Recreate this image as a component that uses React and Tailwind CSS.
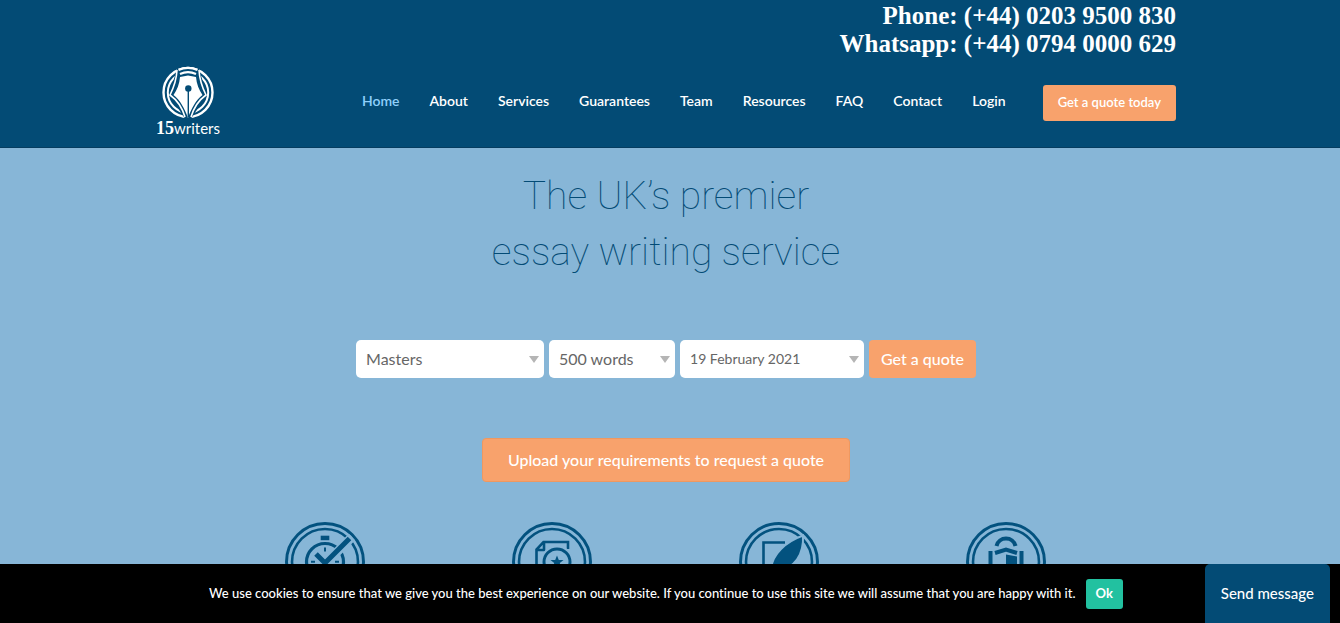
import React from 'react';

const navItems = ['Home', 'About', 'Services', 'Guarantees', 'Team', 'Resources', 'FAQ', 'Contact', 'Login'];

function Logo() {
  return (
    <a href="#home" aria-label="15writers" className="flex flex-col items-center text-white">
      <svg viewBox="0 0 52 54" className="w-[52px] h-[54px]" fill="none">
        <circle cx="26" cy="26.500" r="24.500" stroke="#fff" strokeWidth="2.400" />
        <circle cx="26" cy="26.500" r="20.200" stroke="#fff" strokeWidth="2" />
        <path d="M15 3 L37 3 L45 29 L28 54 L24 54 L7 29 Z" fill="#034b75" />
        <path d="M16.500 3.900 A24.500 24.500 0 0 1 35.500 3.900 M18 7.900 A20.200 20.200 0 0 1 34 7.900" stroke="#fff" strokeWidth="2.200" />
        <path d="M15 4 C14.500 14 12 21 8 29 C15 34 20 41 23 51 M37 4 C37.500 14 40 21 44 29 C37 34 32 41 29 51" stroke="#fff" strokeWidth="1.600" />
        <path d="M18 11 L26 9.500 L34 11 C34.500 18 37 24 40.500 29 C34 34 29.500 42 26 52 C22.500 42 18 34 11.500 29 C15 24 17.500 18 18 11 Z" fill="#fff" />
        <circle cx="26.300" cy="22.500" r="3.200" fill="#034b75" />
        <path d="M26.300 24 V51" stroke="#034b75" strokeWidth="1.400" />
      </svg>
      <span className="flex items-baseline leading-4">
        <span className="font-['Liberation_Serif'] font-bold text-lg leading-4">15</span>
        <span className="text-[15px] leading-4">writers</span>
      </span>
    </a>
  );
}

function Arrow() {
  return (
    <svg viewBox="0 0 10 7" className="absolute right-[5px] top-4 w-[10px] h-[7px] pointer-events-none">
      <path d="M0 0 H10 L5 7 Z" fill="#b5b5b5" />
    </svg>
  );
}

function SelectBox({ label, options, className }) {
  return (
    <div className={`relative ${className}`}>
      <select aria-label={label} className="appearance-none w-full h-[38px] pl-2.5 pr-5 rounded-[5px] bg-white text-[#666]">
        {options.map((option) => (
          <option key={option}>{option}</option>
        ))}
      </select>
      <Arrow />
    </div>
  );
}

function Badge({ children }) {
  return (
    <svg viewBox="0 0 80 80" className="size-20" fill="none" stroke="#03527f">
      <circle cx="40" cy="40" r="38.500" strokeWidth="3" />
      <circle cx="40" cy="40" r="33" strokeWidth="2.600" />
      {children}
    </svg>
  );
}

function StopwatchIcon() {
  return (
    <Badge>
      <rect x="35.700" y="13.700" width="8.600" height="4.500" fill="#03527f" stroke="none" />
      <circle cx="40" cy="40" r="18.500" strokeWidth="3.200" />
      <path d="M40 25.500 V29.500 M26 39.700 H30 M50 39.700 H54" strokeWidth="2" />
      <path d="M31 33 L40 42 L67 15" stroke="#87b6d7" strokeWidth="9" />
      <path d="M31 32 L40 41 L64.500 16.500" strokeWidth="5" />
    </Badge>
  );
}

function CertificateIcon() {
  return (
    <Badge>
      <path d="M56 27 V20 H31.500 L24.500 27.500 V60 H56 V55 M32 20 V28 H24.500" strokeWidth="2.600" />
      <circle cx="45" cy="40" r="15" fill="#87b6d7" stroke="#87b6d7" strokeWidth="3" />
      <circle cx="45" cy="40" r="13" strokeWidth="3" />
      <path d="M45 33.500 L46.800 38 H51.500 L47.800 41 L49.200 46 L45 43 L40.800 46 L42.200 41 L38.500 38 H43.200 Z" fill="#03527f" stroke="none" />
    </Badge>
  );
}

function QuillIcon() {
  return (
    <Badge>
      <path d="M46 20.500 H24.500 V60 H56 V46" strokeWidth="2.600" />
      <path d="M64 13.500 C46 20 34 32 32 46 L28 58 L38 49 C56 47 65 32 64 13.500 Z" fill="#03527f" stroke="#87b6d7" strokeWidth="2" />
    </Badge>
  );
}

function LockIcon() {
  return (
    <Badge>
      <path d="M30.500 24 A9.800 9.800 0 0 1 49.500 24" strokeWidth="4" />
      <path d="M29 31 L40 27.500 L51 31" strokeWidth="4" />
      <path d="M24.500 29 V60 H55.500 V29" strokeWidth="4" />
      <path d="M40 32.500 L51 34.500 V56 H40 Z" fill="#03527f" stroke="none" />
    </Badge>
  );
}

function Header() {
  return (
    <header className="bg-[#034b75] border-b border-[#063d60]">
      <div className="max-w-[1020px] mx-auto">
        <div className="text-right text-white font-['Liberation_Serif'] font-bold text-[25px] leading-7 pt-0.5">
          <p>Phone: (+44) 0203 9500 830</p>
          <p>Whatsapp: (+44) 0794 0000 629</p>
        </div>
        <div className="flex items-start justify-between pt-2 pb-[11px]">
          <Logo />
          <div className="flex items-start pt-[19px]">
            <nav className="flex gap-[30px] pt-1.5 mr-[37px] text-sm font-semibold text-white">
              {navItems.map((item) => (
                <a key={item} href={`#${item.toLowerCase()}`} className={item === 'Home' ? 'text-[#8fd0fb]' : ''}>
                  {item}
                </a>
              ))}
            </nav>
            <button className="h-9 px-[15px] rounded-[3px] bg-[#f8a26c] text-white text-[13px] font-semibold">
              Get a quote today
            </button>
          </div>
        </div>
      </div>
    </header>
  );
}

function Hero() {
  return (
    <main className="flex flex-col items-center pt-5">
      <h1 className="text-center text-[#034b75] font-['Roboto',sans-serif] font-thin text-[39px] leading-14">
        The UK’s premier
        <br />
        essay writing service
      </h1>
      <form className="flex gap-[5px] mt-15 text-base">
        <SelectBox label="Level" className="w-[188px]" options={['Masters', 'Undergraduate', 'PhD']} />
        <SelectBox label="Word count" className="w-[126px]" options={['500 words', '1000 words', '1500 words']} />
        <SelectBox label="Deadline" className="w-[184px] text-sm" options={['19 February 2021', '20 February 2021']} />
        <button type="button" className="h-[38px] px-3 rounded-[4px] bg-[#f8a26c] text-white font-medium">Get a quote</button>
      </form>
      <button className="h-11 mt-15 px-[25px] rounded-[4px] border border-[#ef9860] bg-[#f8a26c] text-white font-medium">
        Upload your requirements to request a quote
      </button>
      <div className="flex gap-[147px] mt-10 pr-0.5">
        <StopwatchIcon />
        <CertificateIcon />
        <QuillIcon />
        <LockIcon />
      </div>
    </main>
  );
}

function CookieBar() {
  return (
    <div className="fixed inset-x-0 bottom-0 h-[59px] pr-2 flex items-center justify-center gap-2.5 bg-black text-white text-[13px] font-medium">
      <p>
        We use cookies to ensure that we give you the best experience on our website. If you continue to use this site we will assume that you are happy with it.
      </p>
      <button className="h-[30px] px-2.5 rounded-[3px] bg-[#22c1a0] font-bold">Ok</button>
    </div>
  );
}

export default function App() {
  return (
    <div className="min-h-screen pr-2 bg-[linear-gradient(#034b75_0_147px,#063d60_147px_148px,#87b6d7_148px)] font-['Lato',sans-serif] [font-variant-ligatures:none]">
      <Header />
      <Hero />
      <CookieBar />
      <button className="fixed bottom-0 right-2.5 h-[59px] px-4 rounded-t-[5px] bg-[#034b75] text-white text-[15px] font-medium">
        Send message
      </button>
    </div>
  );
}
